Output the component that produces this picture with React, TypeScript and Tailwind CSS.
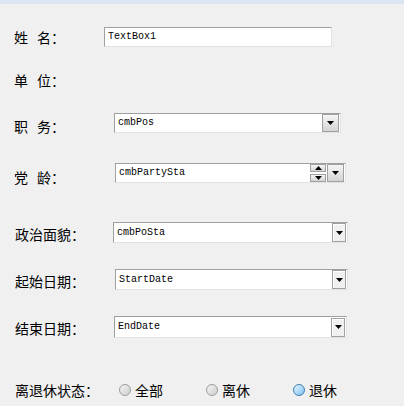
import type { ReactNode } from "react"

const cjk = "font-['Noto_Sans_CJK_SC','Noto_Sans',sans-serif]"
const mono = "font-['Liberation_Mono',monospace]"

function Arrow({ up = false }: { up?: boolean }) {
  return (
    <svg width="7" height="4" viewBox="0 0 7 4" className="block">
      <polygon points={up ? "0,4 7,4 3.5,0" : "0,0 7,0 3.5,4"} fill="#000" />
    </svg>
  )
}

function Label({ children, className = "" }: { children: ReactNode; className?: string }) {
  return (
    <span className={`${cjk} w-[90px] shrink-0 text-[14px] leading-[14px] text-black ${className}`}>
      {children}
    </span>
  )
}

// two-char label with a wide gap, e.g. 姓 名：
function Pair({ a, b }: { a: string; b: string }) {
  return (
    <span className="flex">
      <span>{a}</span>
      <span className="w-[9px]" />
      <span>{b}</span>
      <span>：</span>
    </span>
  )
}

function Field({ text, className = "", children }: { text: string; className?: string; children?: ReactNode }) {
  return (
    <div
      className={`flex items-center h-full bg-white border-t border-l border-t-[#a0a0a0] border-l-[#a0a0a0] border-r border-b border-r-[#e3e3e3] border-b-[#e3e3e3] ${className}`}
    >
      <span className={`${mono} flex-1 pl-[3px] text-[10px] leading-none text-black`}>{text}</span>
      {children}
    </div>
  )
}

// big 3D-style drop button
function DropButton() {
  return (
    <div className="flex items-center justify-center w-[17px] h-[18px] mr-[1px] border border-[#a0a0a0] bg-gradient-to-b from-[#f6f6f6] to-[#d4d4d4]">
      <Arrow />
    </div>
  )
}

// small classic-style drop button
function SmallDrop() {
  return (
    <div className="flex items-center justify-center w-[14px] h-[19px] mr-[1px] border border-[#a0a0a0] bg-[#f0f0f0] shadow-[inset_1px_1px_0_#fff]">
      <Arrow />
    </div>
  )
}

function Radio({ checked = false }: { checked?: boolean }) {
  return checked ? (
    <span className="block w-[12px] h-[12px] rounded-full border border-[#3c7fb1] bg-gradient-to-br from-[#e6f5ff] to-[#7cc0ee]" />
  ) : (
    <span className="block w-[12px] h-[12px] rounded-full border border-[#9c9c9c] bg-gradient-to-br from-[#f4f4f4] to-[#cfcfcf]" />
  )
}

export default function App() {
  return (
    <div className="w-[404px] h-[406px] bg-[#f0f0f0] overflow-hidden">
      <div className="h-[4px] bg-[#dbe5f3]" />
      <div className="pl-[14px]">
        {/* 姓名 */}
        <div className="flex items-center h-[20px] mt-[23px]">
          <Label><Pair a="姓" b="名" /></Label>
          <Field text="TextBox1" className="w-[228px]" />
        </div>

        {/* 单位 */}
        <div className="flex items-center h-[14px] mt-[26px]">
          <Label><Pair a="单" b="位" /></Label>
        </div>

        {/* 职务 */}
        <div className="flex items-center h-[20px] mt-[26px]">
          <Label className="mt-[6px]"><Pair a="职" b="务" /></Label>
          <Field text="cmbPos" className="ml-[10px] w-[227px]">
            <DropButton />
          </Field>
        </div>

        {/* 党龄 */}
        <div className="flex items-center h-[20px] mt-[30px]">
          <Label className="mt-[8px]"><Pair a="党" b="龄" /></Label>
          <Field text="cmbPartySta" className="ml-[11px] w-[231px]">
            <div className="flex flex-col gap-[2px] mr-[1px]">
              <div className="flex items-center justify-center w-[16px] h-[8px] border border-[#a0a0a0] bg-gradient-to-b from-[#f6f6f6] to-[#d4d4d4]">
                <Arrow up />
              </div>
              <div className="flex items-center justify-center w-[16px] h-[8px] border border-[#a0a0a0] bg-gradient-to-b from-[#f6f6f6] to-[#d4d4d4]">
                <Arrow />
              </div>
            </div>
            <DropButton />
          </Field>
        </div>

        {/* 政治面貌 */}
        <div className="flex items-center h-[21px] mt-[39px]">
          <Label className="mt-[3px] ml-[1px]">政治面貌：</Label>
          <Field text="cmbPoSta" className="ml-[8px] w-[235px]">
            <SmallDrop />
          </Field>
        </div>

        {/* 起始日期 */}
        <div className="flex items-center h-[21px] mt-[26px]">
          <Label className="mt-[2px] ml-[1px]">起始日期：</Label>
          <Field text="StartDate" className="ml-[10px] w-[233px]">
            <SmallDrop />
          </Field>
        </div>

        {/* 结束日期 */}
        <div className="flex items-center h-[22px] mt-[26px]">
          <Label className="mt-[2px] ml-[1px]">结束日期：</Label>
          <Field text="EndDate" className="ml-[9px] w-[233px]">
            <SmallDrop />
          </Field>
        </div>

        {/* 离退休状态 */}
        <div className={`flex items-center h-[16px] mt-[44px] ${cjk} text-[14px] leading-[14px] text-black`}>
          <span className="ml-[1px] w-[104px] shrink-0">离退休状态：</span>
          <div className="flex items-center w-[87px] gap-[4px]">
            <Radio />
            <span>全部</span>
          </div>
          <div className="flex items-center w-[87px] gap-[4px]">
            <Radio />
            <span>离休</span>
          </div>
          <div className="flex items-center gap-[4px]">
            <Radio checked />
            <span>退休</span>
          </div>
        </div>
      </div>
    </div>
  )
}
